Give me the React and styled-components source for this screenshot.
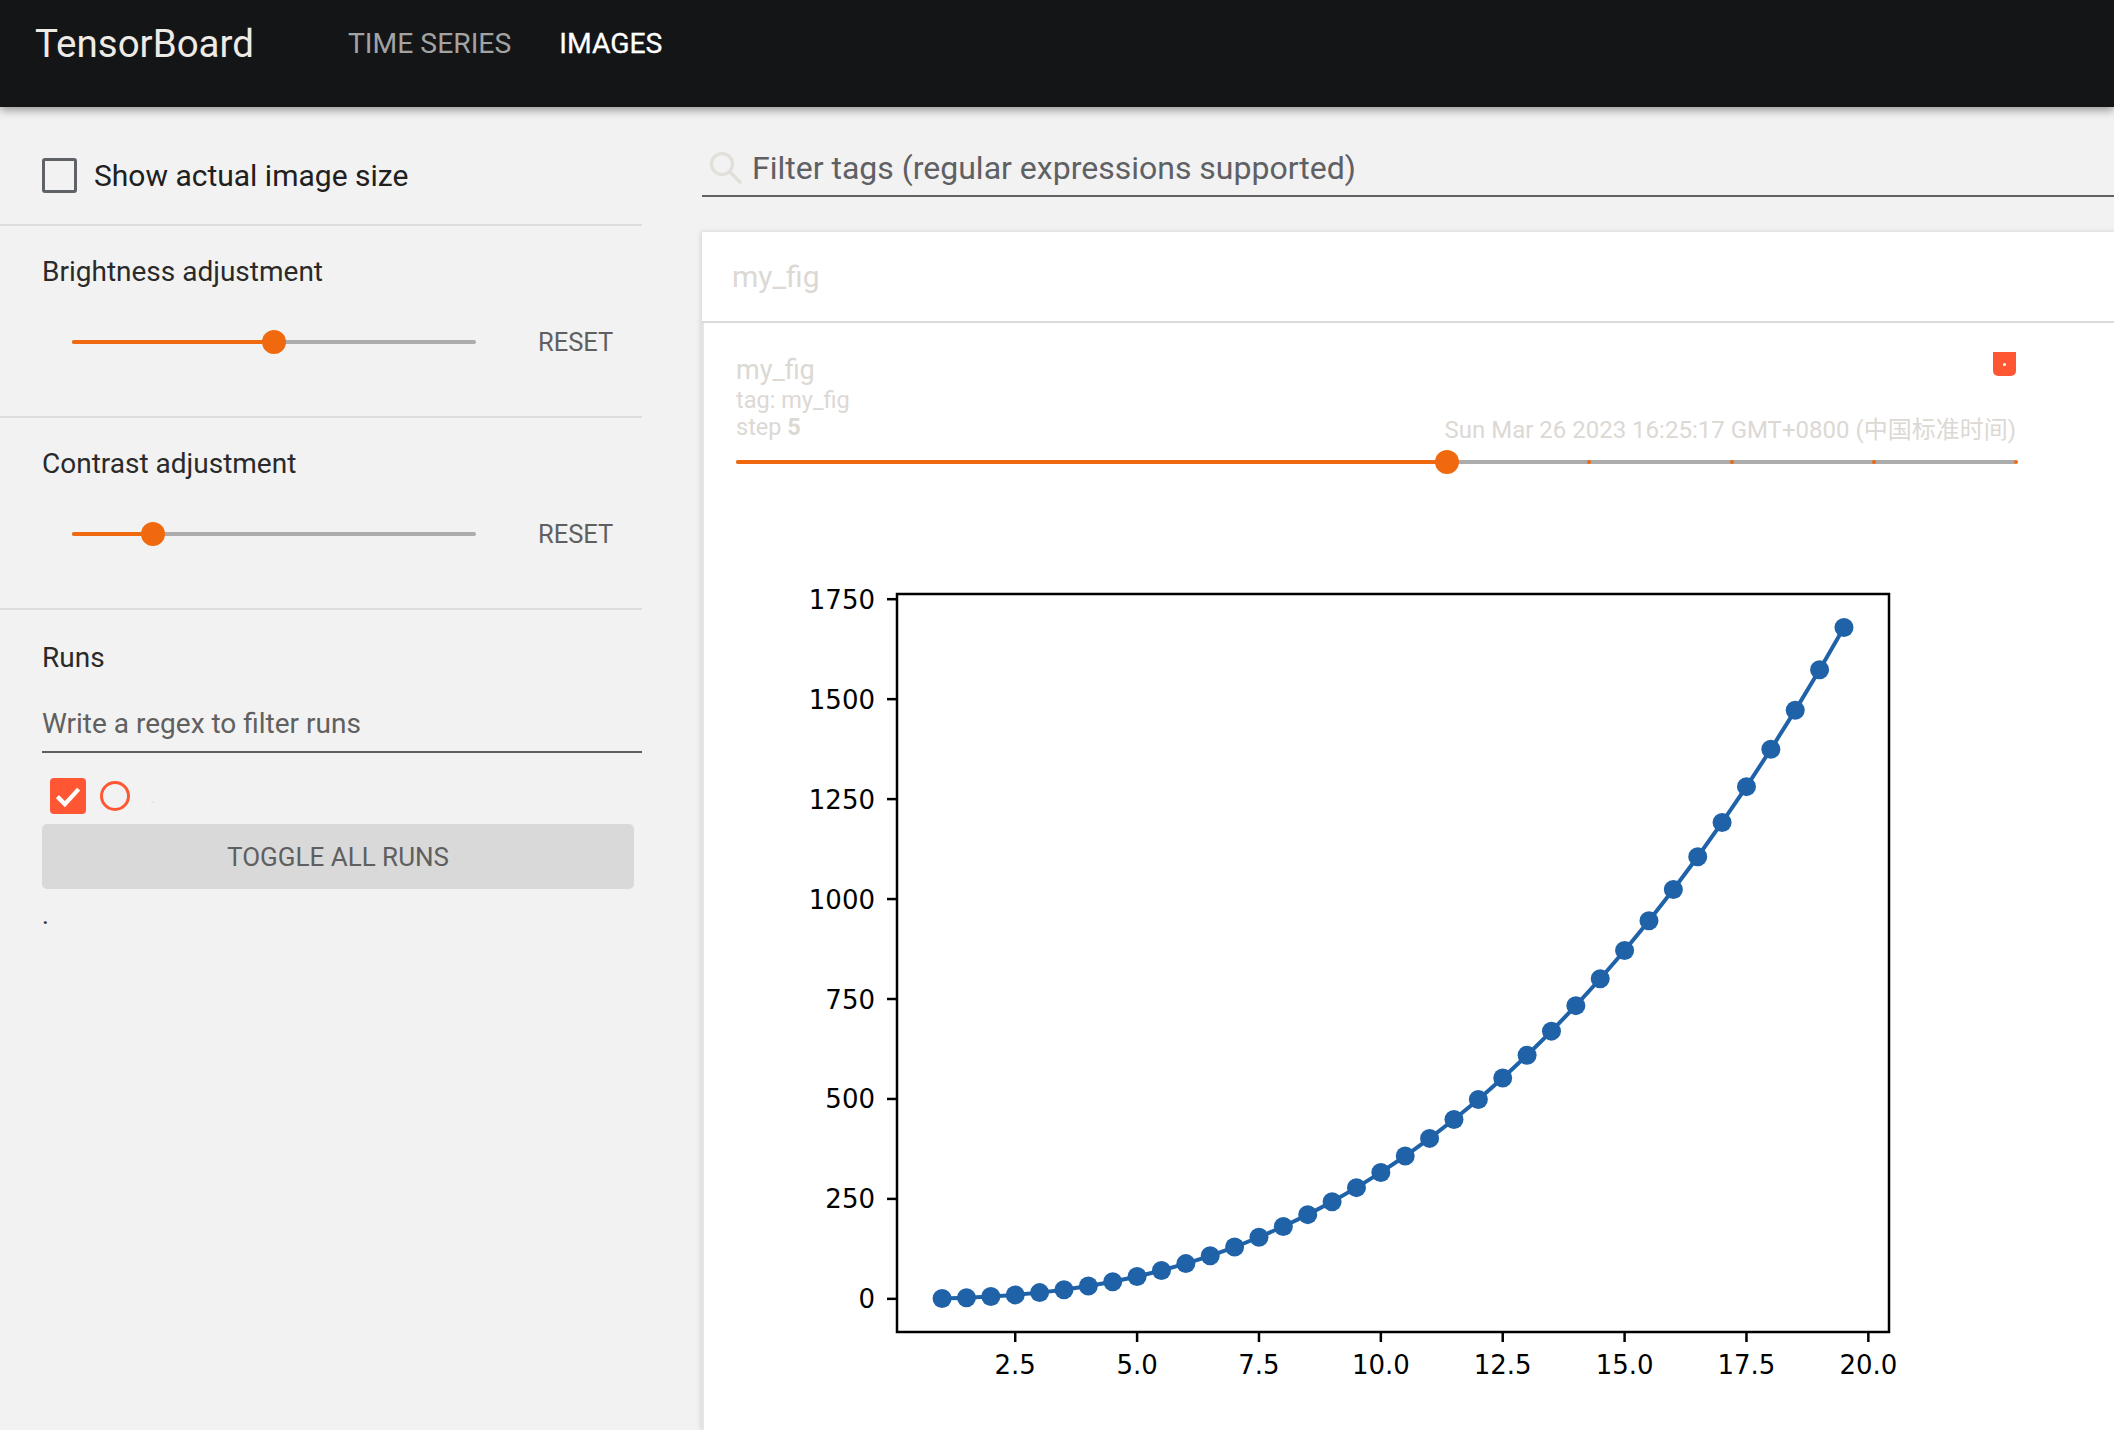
import React from 'react'
import styled, { createGlobalStyle } from 'styled-components'

const orange = '#f0690f'
const runColor = '#ff5733'
const faint = '#dcd8d4'
const plotBlue = '#1f62a8'

const GlobalStyle = createGlobalStyle`
  html, body {
    margin: 0;
    padding: 0;
    background: #f2f2f2;
    font-family: Roboto, "Noto Sans", "Noto Sans CJK SC", sans-serif;
  }
  * { box-sizing: border-box; }
`

const Page = styled.div`
  height: 1430px;
  display: flex;
  flex-direction: column;
  overflow: hidden;
`

const Header = styled.header`
  height: 107px;
  flex: none;
  background: #141517;
  display: flex;
  align-items: flex-start;
  padding-left: 35px;
  box-shadow: 0 3px 9px rgba(0, 0, 0, 0.4);
  position: relative;
  z-index: 2;
`

const HeaderRow = styled.div`
  height: 86px;
  display: flex;
  align-items: center;
`

const Title = styled.div`
  font-size: 38.5px;
  color: #eeebe7;
`

const Nav = styled.nav`
  display: flex;
  gap: 48px;
  margin-left: 94px;
`

const Tab = styled.div`
  font-size: 28.3px;
  color: ${p => (p.$active ? '#ffffff' : '#a3a3a3')};
  -webkit-text-stroke: ${p => (p.$active ? '0.3px #ffffff' : '0')};
`

const Body = styled.div`
  flex: 1;
  display: flex;
  min-height: 0;
`

const Sidebar = styled.aside`
  width: 642px;
  flex: none;
`

const Section = styled.section`
  padding: ${p => p.$pad || '31px 0 54px 42px'};
  height: ${p => p.$h || 'auto'};
  border-bottom: ${p => (p.$last ? 'none' : '2px solid #dddddd')};
`

const CheckRow = styled.label`
  display: flex;
  align-items: center;
`

const Checkbox = styled.span`
  width: 35px;
  height: 35px;
  border: 3px solid #5f6266;
  border-radius: 3px;
`

const CheckLabel = styled.span`
  margin-left: 17px;
  font-size: 30px;
  color: #202020;
`

const SectionTitle = styled.div`
  font-size: 28px;
  line-height: 30px;
  color: #2a2a2a;
`

const SliderRow = styled.div`
  height: 40px;
  margin-top: 35px;
  display: flex;
  align-items: center;
`

const Track = styled.div`
  position: relative;
  width: ${p => p.$w}px;
  margin-left: ${p => p.$ml || 0}px;
  height: 4px;
  background: #acacac;
  border-radius: 2px;
`

const TrackFill = styled.div`
  height: 100%;
  background: ${orange};
  border-radius: 2px;
`

const Thumb = styled.div`
  position: absolute;
  top: 50%;
  width: 24px;
  height: 24px;
  margin: -12px 0 0 -12px;
  border-radius: 50%;
  background: ${orange};
`

const Tick = styled.div`
  position: absolute;
  top: 50%;
  width: 4px;
  height: 4px;
  margin: -2px 0 0 -2px;
  border-radius: 50%;
  background: ${orange};
`

const ResetButton = styled.div`
  margin-left: 62px;
  font-size: 25.5px;
  color: #5f5f5f;
`

const RegexInput = styled.div`
  margin-top: 35px;
  width: 600px;
  font-size: 28px;
  line-height: 32px;
  color: #606060;
  padding-bottom: 11px;
  border-bottom: 2px solid #5f5f5f;
`

const RunRow = styled.div`
  margin-top: 25px;
  display: flex;
  align-items: center;
  padding-left: 8px;
`

const RunCheck = styled.span`
  width: 36px;
  height: 36px;
  border-radius: 4px;
  background: ${runColor};
  display: flex;
  align-items: center;
  justify-content: center;
`

const RunDot = styled.span`
  width: 30px;
  height: 30px;
  margin-left: 14px;
  border: 3px solid ${runColor};
  border-radius: 50%;
`

const RunName = styled.span`
  margin-left: 20px;
  font-size: 20px;
  color: #e4e4e4;
`

const ToggleButton = styled.div`
  margin-top: 10px;
  width: 592px;
  height: 65px;
  border-radius: 5px;
  background: #d9d9d9;
  display: flex;
  align-items: center;
  justify-content: center;
  font-size: 26px;
  color: #5f5f5f;
`

const Stray = styled.div`
  margin-top: 11px;
  font-size: 26px;
  line-height: 30px;
  color: #333;
`

const Main = styled.main`
  flex: 1;
  padding-left: 60px;
  display: flex;
  flex-direction: column;
`

const FilterRow = styled.div`
  margin-top: 43px;
  display: flex;
  align-items: center;
  padding-bottom: 9px;
  border-bottom: 2px solid #616161;
`

const FilterText = styled.div`
  margin-left: 8px;
  font-size: 32px;
  line-height: 36px;
  color: #5f6064;
`

const Card = styled.div`
  margin-top: 35px;
  flex: 1;
  display: flex;
  flex-direction: column;
  background: #fff;
  box-shadow: -1px 0 5px rgba(0, 0, 0, 0.14);
`

const CardHeader = styled.div`
  height: 91px;
  flex: none;
  padding-left: 30px;
  display: flex;
  align-items: center;
  font-size: 30px;
  color: ${faint};
  border-bottom: 2px solid #dadada;
`

const CardBody = styled.div`
  flex: 1;
  padding: 32px 100px 0 32px;
  border-left: 2px solid #e6e6e6;
`

const InfoRow = styled.div`
  display: flex;
  justify-content: space-between;
  align-items: stretch;
`

const InfoText = styled.div`
  color: ${faint};
  font-size: ${p => p.$size}px;
  line-height: ${p => p.$lh}px;

  b {
    font-weight: 700;
  }
`

const InfoRight = styled.div`
  display: flex;
  flex-direction: column;
  align-items: flex-end;
  justify-content: space-between;
`

const Badge = styled.div`
  width: 23px;
  height: 24px;
  margin-top: -3px;
  background: ${runColor};
  border-radius: 0 0 5px 5px;
  display: flex;
  align-items: center;
  justify-content: center;

  &::after {
    content: '';
    width: 3px;
    height: 3px;
    border-radius: 50%;
    background: #fff;
  }
`

const Timestamp = styled.div`
  font-size: 24px;
  line-height: 28px;
  margin-bottom: -3px;
  color: ${faint};
  font-family: Roboto, "Noto Sans CJK SC", sans-serif;
`

const StepSlider = styled.div`
  margin-top: 9px;
  height: 24px;
  display: flex;
  align-items: center;
`

const Chart = styled.svg`
  display: block;
  margin: 87px 0 0 46px;
  font-family: "DejaVu Sans", sans-serif;
`

function Slider({ width, value, ticks, ml }) {
  const x = width * value
  return (
    <Track $w={width} $ml={ml}>
      <TrackFill style={{ width: x }} />
      {ticks &&
        Array.from({ length: ticks + 1 }, (_, i) => i)
          .filter(i => (i / ticks) * width > x)
          .map(i => <Tick key={i} style={{ left: (i / ticks) * width }} />)}
      <Thumb style={{ left: x }} />
    </Track>
  )
}

function SearchIcon() {
  return (
    <svg width="36" height="36" viewBox="0 0 36 36" style={{ marginLeft: 6 }}>
      <circle cx="14" cy="14" r="10.5" fill="none" stroke="#e2dfdb" strokeWidth="3.2" />
      <path d="M21.5 21.5 L32 32" stroke="#e2dfdb" strokeWidth="3.6" strokeLinecap="round" />
    </svg>
  )
}

function PlotImage() {
  const W = 1160
  const H = 840
  const ax = { l: 115, r: 1107, t: 33, b: 771 }
  const sx = v => ax.l + (v - 0.075) * 48.75
  const sy = v => 737.85 - 0.3998 * v
  const xs = Array.from({ length: 38 }, (_, i) => 1 + i * 0.5)
  const pts = xs.map(x => [sx(x), sy(Math.pow(x, 2.5))])
  const yt = [0, 250, 500, 750, 1000, 1250, 1500, 1750]
  const xt = [2.5, 5, 7.5, 10, 12.5, 15, 17.5, 20]
  return (
    <Chart width={W} height={H} viewBox={`0 0 ${W} ${H}`}>
      <rect x={ax.l} y={ax.t} width={ax.r - ax.l} height={ax.b - ax.t} fill="none" stroke="#000" strokeWidth="2.5" />
      {yt.map(v => (
        <g key={v}>
          <line x1={ax.l - 10} x2={ax.l} y1={sy(v)} y2={sy(v)} stroke="#000" strokeWidth="2.5" />
          <text x={ax.l - 22} y={sy(v) + 9.5} textAnchor="end" fontSize="26" fill="#000">{v}</text>
        </g>
      ))}
      {xt.map(v => (
        <g key={v}>
          <line x1={sx(v)} x2={sx(v)} y1={ax.b} y2={ax.b + 10} stroke="#000" strokeWidth="2.5" />
          <text x={sx(v)} y={ax.b + 42} textAnchor="middle" fontSize="26" fill="#000">{v.toFixed(1)}</text>
        </g>
      ))}
      <polyline points={pts.map(p => p.join(',')).join(' ')} fill="none" stroke={plotBlue} strokeWidth="4" />
      {pts.map(([x, y], i) => (
        <circle key={i} cx={x} cy={y} r="9.5" fill={plotBlue} />
      ))}
    </Chart>
  )
}

export default function App() {
  return (
    <Page>
      <GlobalStyle />
      <Header>
        <HeaderRow>
          <Title>TensorBoard</Title>
          <Nav>
            <Tab>TIME SERIES</Tab>
            <Tab $active>IMAGES</Tab>
          </Nav>
        </HeaderRow>
      </Header>
      <Body>
        <Sidebar>
          <Section $pad="51px 0 0 42px" $h="119px">
            <CheckRow>
              <Checkbox />
              <CheckLabel>Show actual image size</CheckLabel>
            </CheckRow>
          </Section>
          <Section>
            <SectionTitle>Brightness adjustment</SectionTitle>
            <SliderRow>
              <Slider width={404} value={0.5} ml={30} />
              <ResetButton>RESET</ResetButton>
            </SliderRow>
          </Section>
          <Section>
            <SectionTitle>Contrast adjustment</SectionTitle>
            <SliderRow>
              <Slider width={404} value={0.2} ml={30} />
              <ResetButton>RESET</ResetButton>
            </SliderRow>
          </Section>
          <Section $pad="33px 0 0 42px" $last>
            <SectionTitle>Runs</SectionTitle>
            <RegexInput>Write a regex to filter runs</RegexInput>
            <RunRow>
              <RunCheck>
                <svg width="30" height="30" viewBox="0 0 24 24">
                  <path d="M3.5 12.5 L9.5 18.5 L20.5 6.5" fill="none" stroke="#fff" strokeWidth="3.4" />
                </svg>
              </RunCheck>
              <RunDot />
              <RunName>.</RunName>
            </RunRow>
            <ToggleButton>TOGGLE ALL RUNS</ToggleButton>
            <Stray>.</Stray>
          </Section>
        </Sidebar>
        <Main>
          <FilterRow>
            <SearchIcon />
            <FilterText>Filter tags (regular expressions supported)</FilterText>
          </FilterRow>
          <Card>
            <CardHeader>my_fig</CardHeader>
            <CardBody>
              <InfoRow>
                <div>
                  <InfoText $size={27} $lh={31}>my_fig</InfoText>
                  <InfoText $size={23.5} $lh={28}>tag: my_fig</InfoText>
                  <InfoText $size={23.5} $lh={27}>step <b>5</b></InfoText>
                </div>
                <InfoRight>
                  <Badge />
                  <Timestamp>Sun Mar 26 2023 16:25:17 GMT+0800 (中国标准时间)</Timestamp>
                </InfoRight>
              </InfoRow>
              <StepSlider>
                <Slider width={1280} value={5 / 9} ticks={9} />
              </StepSlider>
              <PlotImage />
            </CardBody>
          </Card>
        </Main>
      </Body>
    </Page>
  )
}
